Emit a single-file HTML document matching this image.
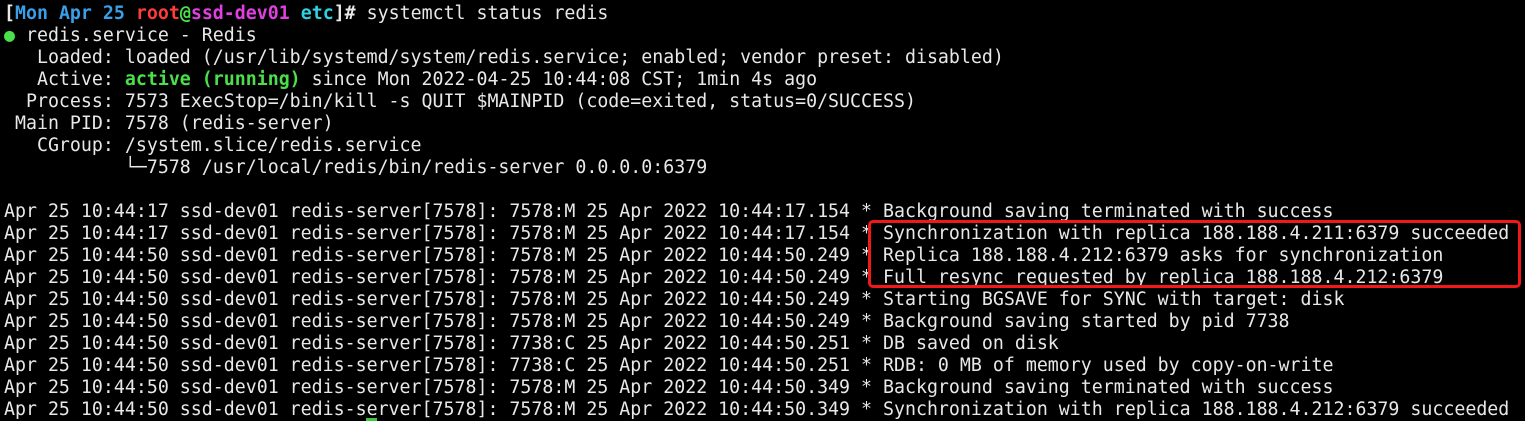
<!DOCTYPE html>
<html><head><meta charset="utf-8"><style>
html,body{margin:0;padding:0;background:#000;width:1525px;height:421px;overflow:hidden}
pre{margin:0;position:absolute;left:4px;top:3px;font-family:"DejaVu Sans Mono","Liberation Mono",monospace;font-size:18.25px;line-height:22px;color:#e8e8e8;white-space:pre}
.b{font-weight:bold}
.bl{color:#3a9fe8}.r{color:#ff3b3b}.g{color:#4be04b}.m{color:#e040e0}.c{color:#30d0e0}
.box{position:absolute;left:868px;top:220px;width:647px;height:62px;border:3px solid #f01818;border-radius:5px}
.cur{position:absolute;left:366px;top:418px;width:11px;height:3px;background:#3ec83e}
</style></head><body>
<pre><span class="b">[<span class="bl">Mon Apr 25</span> <span class="r">root</span><span class="g">@</span><span class="m">ssd-dev01</span> <span class="c">etc</span>]# </span>systemctl status redis
<span class="g">●</span> redis.service - Redis
   Loaded: loaded (/usr/lib/systemd/system/redis.service; enabled; vendor preset: disabled)
   Active: <span class="g b">active (running)</span> since Mon 2022-04-25 10:44:08 CST; 1min 4s ago
  Process: 7573 ExecStop=/bin/kill -s QUIT $MAINPID (code=exited, status=0/SUCCESS)
 Main PID: 7578 (redis-server)
   CGroup: /system.slice/redis.service
           └─7578 /usr/local/redis/bin/redis-server 0.0.0.0:6379

Apr 25 10:44:17 ssd-dev01 redis-server[7578]: 7578:M 25 Apr 2022 10:44:17.154 * Background saving terminated with success
Apr 25 10:44:17 ssd-dev01 redis-server[7578]: 7578:M 25 Apr 2022 10:44:17.154 * Synchronization with replica 188.188.4.211:6379 succeeded
Apr 25 10:44:50 ssd-dev01 redis-server[7578]: 7578:M 25 Apr 2022 10:44:50.249 * Replica 188.188.4.212:6379 asks for synchronization
Apr 25 10:44:50 ssd-dev01 redis-server[7578]: 7578:M 25 Apr 2022 10:44:50.249 * Full resync requested by replica 188.188.4.212:6379
Apr 25 10:44:50 ssd-dev01 redis-server[7578]: 7578:M 25 Apr 2022 10:44:50.249 * Starting BGSAVE for SYNC with target: disk
Apr 25 10:44:50 ssd-dev01 redis-server[7578]: 7578:M 25 Apr 2022 10:44:50.249 * Background saving started by pid 7738
Apr 25 10:44:50 ssd-dev01 redis-server[7578]: 7738:C 25 Apr 2022 10:44:50.251 * DB saved on disk
Apr 25 10:44:50 ssd-dev01 redis-server[7578]: 7738:C 25 Apr 2022 10:44:50.251 * RDB: 0 MB of memory used by copy-on-write
Apr 25 10:44:50 ssd-dev01 redis-server[7578]: 7578:M 25 Apr 2022 10:44:50.349 * Background saving terminated with success
Apr 25 10:44:50 ssd-dev01 redis-server[7578]: 7578:M 25 Apr 2022 10:44:50.349 * Synchronization with replica 188.188.4.212:6379 succeeded</pre>
<div class="box"></div>
<div class="cur"></div>
</body></html>
